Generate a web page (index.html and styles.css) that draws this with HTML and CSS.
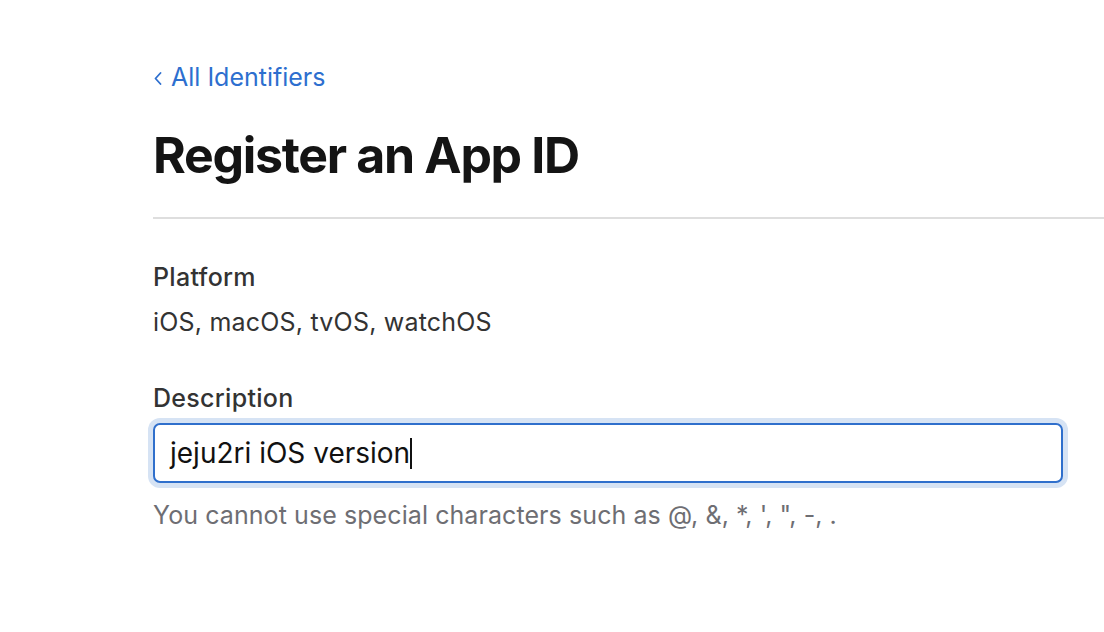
FILE: index.html
```html
<!DOCTYPE html>
<html lang="en">
<head>
<meta charset="utf-8">
<title>Register an App ID</title>
<link rel="stylesheet" href="styles.css">
</head>
<body>
<main class="page">
  <a class="back-link" href="#"><svg class="chev" width="8" height="13" viewBox="0 0 8 13" aria-hidden="true"><polyline points="6.5,1 1.5,6.5 6.5,12" fill="none" stroke="currentColor" stroke-width="1.8" stroke-linecap="round" stroke-linejoin="round"/></svg><span>All Identifiers</span></a>
  <h1 class="title">Register an App ID</h1>
  <hr class="divider">
  <section class="field">
    <div class="label">Platform</div>
    <div class="value">iOS, macOS, tvOS, watchOS</div>
  </section>
  <section class="field field-desc">
    <div class="label">Description</div>
    <div class="input"><span class="input-text">jeju2ri iOS version</span><span class="caret"></span></div>
    <div class="help">You cannot use special characters such as @, &amp;, *, ', ", -, .</div>
  </section>
</main>
</body>
</html>
```
FILE: styles.css
```css
html, body {
  margin: 0;
  padding: 0;
  background: #ffffff;
}
body {
  font-family: Inter, "Noto Sans", sans-serif;
  color: #333336;
}
.page {
  padding: 62px 0 0 153px;
}
.back-link {
  display: flex;
  align-items: center;
  gap: 9px;
  font-size: 25px;
  line-height: 30px;
  color: #2d6fcf;
  text-decoration: none;
}
.chev {
  flex: none;
  margin-left: 1px;
  margin-top: 3px;
}
.title {
  margin: 33px 0 0;
  font-size: 50px;
  line-height: 60px;
  font-weight: 700;
  color: #141414;
  letter-spacing: -1.3px;
}
.divider {
  margin: 32px 0 0;
  border: 0;
  height: 2px;
  background: #dedede;
}
.field {
  margin-top: 43px;
}
.label {
  font-size: 25px;
  line-height: 30px;
  font-weight: 500;
  letter-spacing: 0.3px;
  color: #333333;
}
.value {
  margin-top: 15px;
  font-size: 25px;
  line-height: 30px;
  letter-spacing: 0.2px;
  color: #333333;
}
.field-desc {
  margin-top: 46px;
}
.input {
  box-sizing: border-box;
  display: flex;
  align-items: center;
  margin-top: 10px;
  width: 910px;
  height: 60px;
  padding: 0 15px;
  background: #fff;
  border: 2px solid #2f6fcc;
  border-radius: 7px;
  box-shadow: 0 0 0 5px #d6e3f4;
  font-size: 28px;
  line-height: 56px;
  color: #111;
}
.caret {
  display: inline-block;
  width: 2px;
  height: 31px;
  background: #111;
  margin-left: 0;
  margin-top: 1px;
}
.help {
  margin-top: 17px;
  font-size: 25px;
  line-height: 30px;
  letter-spacing: 0.08px;
  color: #6e6e73;
}
```
